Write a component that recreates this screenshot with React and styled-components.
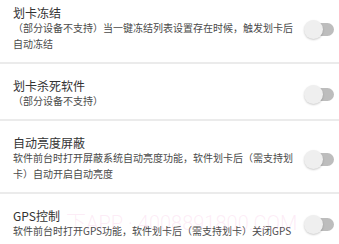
import React from "react";
import styled, { createGlobalStyle } from "styled-components";

const GlobalStyle = createGlobalStyle`
  html, body {
    margin: 0;
    padding: 0;
    background: #fff;
  }
  body {
    font-family: "Noto Sans CJK SC", "Noto Sans", sans-serif;
    overflow: hidden;
  }
`;

const items = [
  {
    title: "划卡冻结",
    desc: "（部分设备不支持）当一键冻结列表设置存在时候，触发划卡后自动冻结",
  },
  {
    title: "划卡杀死软件",
    desc: "（部分设备不支持）",
  },
  {
    title: "自动亮度屏蔽",
    desc: "软件前台时打开屏蔽系统自动亮度功能，软件划卡后（需支持划卡）自动开启自动亮度",
  },
  {
    title: "GPS控制",
    desc: "软件前台时打开GPS功能，软件划卡后（需支持划卡）关闭GPS",
  },
];

const App = () => {
  return (
    <Page>
      <GlobalStyle />
      <List>
        {items.map((item) => (
          <Row key={item.title}>
            <Text>
              <Title>{item.title}</Title>
              <Desc>{item.desc}</Desc>
            </Text>
            <Switch>
              <Track />
              <Thumb />
            </Switch>
          </Row>
        ))}
      </List>
      <Watermark>下APP · 4008891800.COM</Watermark>
    </Page>
  );
};

const Page = styled.div`
  position: relative;
  width: 339px;
  height: 244px;
  overflow: hidden;
  background: #fff;
`;

const List = styled.div`
  display: flex;
  flex-direction: column;
  margin-top: -9px;
`;

const Row = styled.div`
  display: flex;
  align-items: center;
  padding: 15px 0 10px 13px;
  border-bottom: 2px solid #ebebeb;
`;

const Text = styled.div`
  flex: 1;
  min-width: 0;
`;

const Title = styled.div`
  font-size: 12px;
  line-height: 14px;
  color: #333;
`;

const Desc = styled.div`
  font-size: 10px;
  line-height: 16px;
  color: #4a4a4a;
`;

const Switch = styled.div`
  position: relative;
  flex: none;
  width: 30px;
  height: 19px;
  margin: 0 5px 0 7px;
`;

const Track = styled.div`
  position: absolute;
  right: 0;
  top: 3px;
  width: 24px;
  height: 13px;
  border-radius: 7px;
  background: #bdbdbd;
`;

const Thumb = styled.div`
  position: absolute;
  left: 0;
  top: 0;
  width: 19px;
  height: 19px;
  border-radius: 50%;
  background: #efefef;
  box-shadow: 0 1px 2px rgba(0, 0, 0, 0.2);
`;

const Watermark = styled.div`
  position: absolute;
  left: 66px;
  top: 207px;
  font-family: "Roboto", "Noto Sans CJK SC", sans-serif;
  font-weight: 300;
  font-size: 20px;
  color: rgba(245, 170, 215, 0.22);
  white-space: nowrap;
  pointer-events: none;
`;

export default App;
